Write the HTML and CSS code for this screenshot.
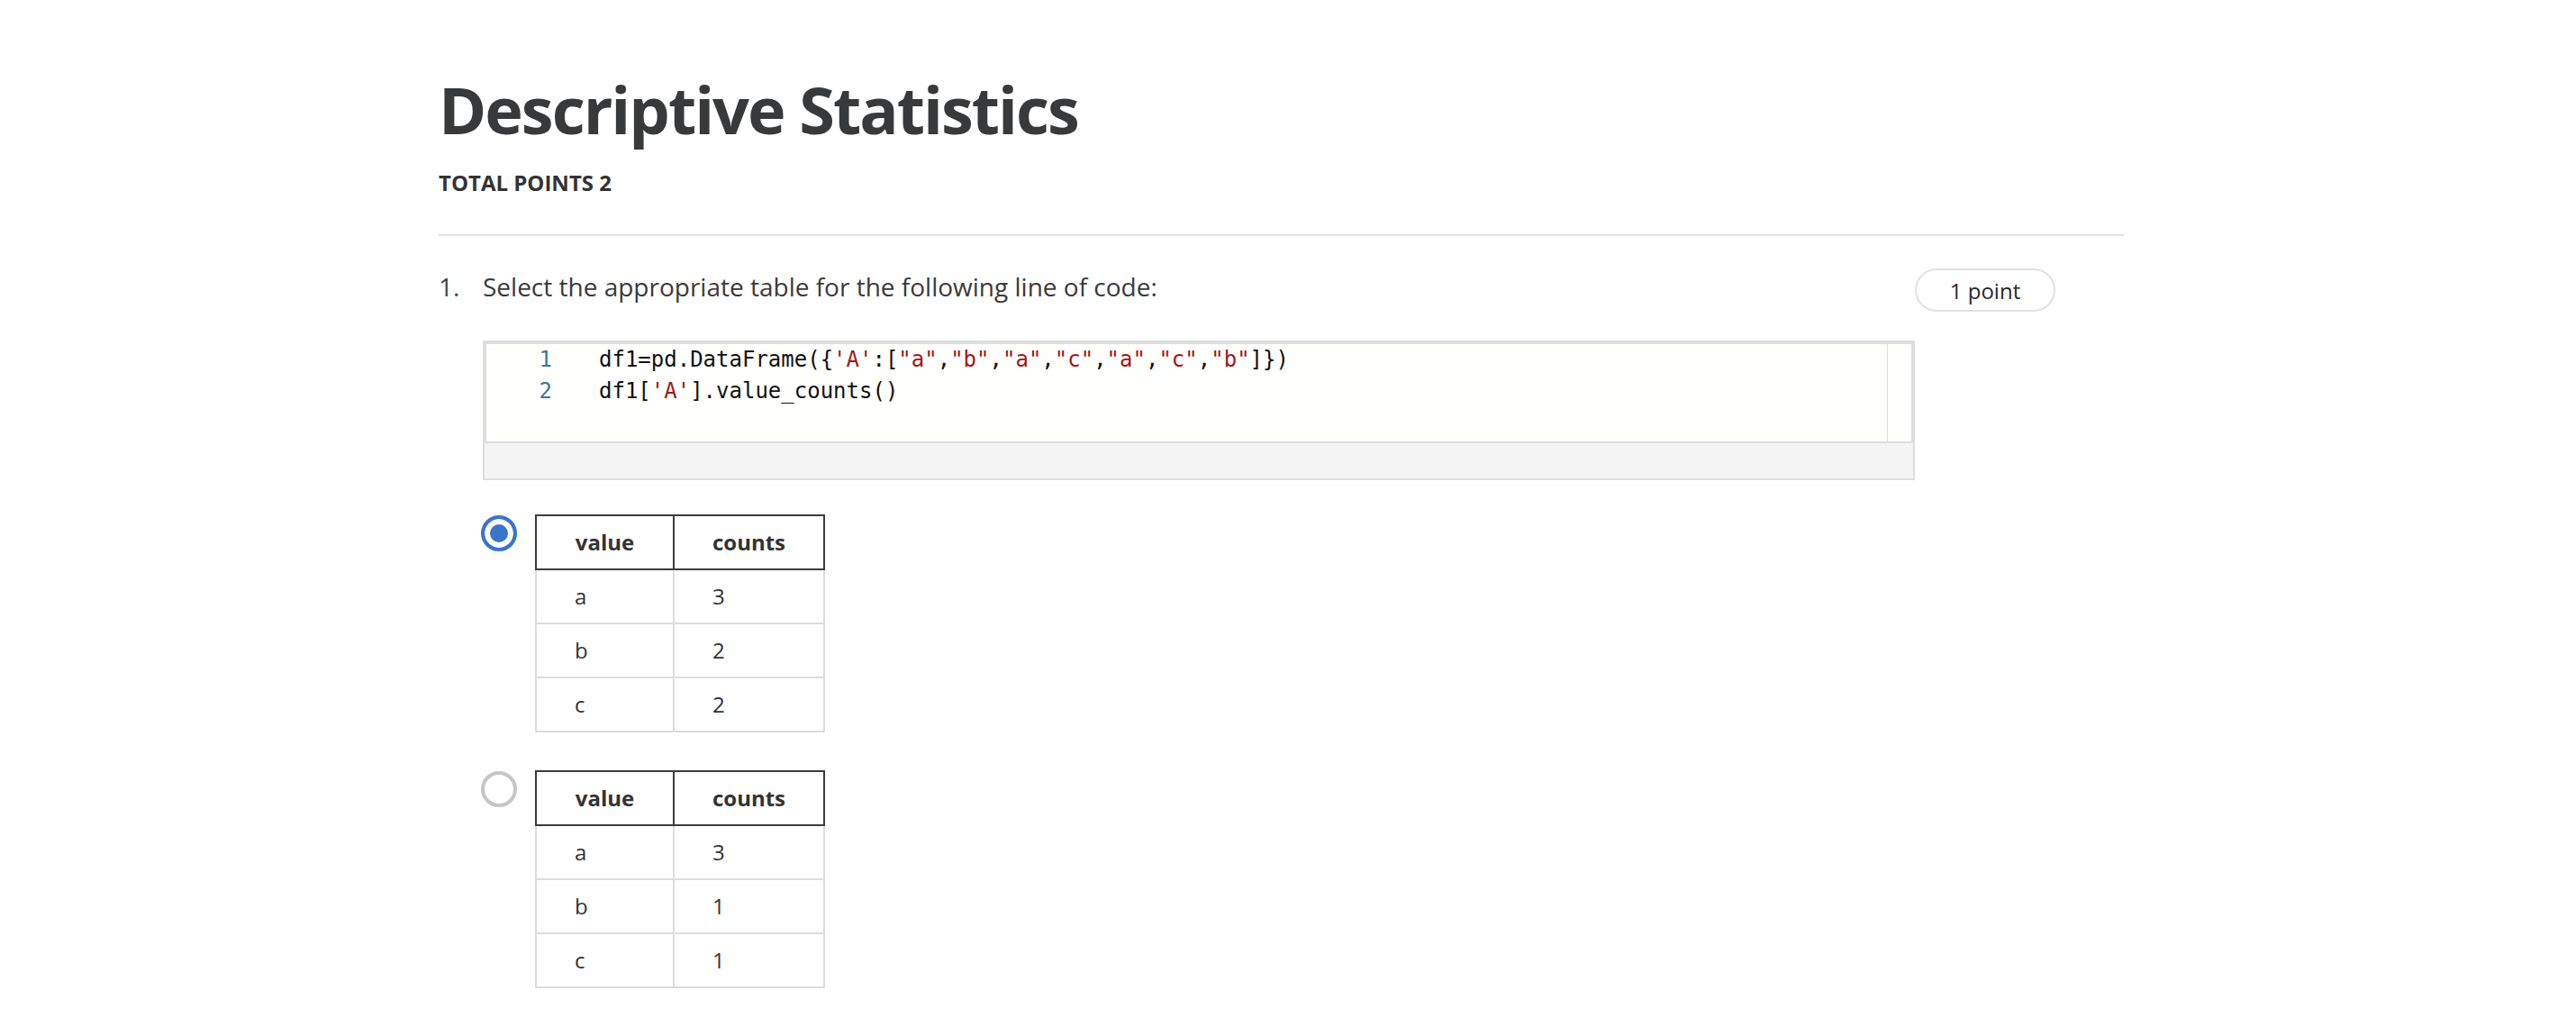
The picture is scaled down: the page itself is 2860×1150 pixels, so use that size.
FILE: index.html
```html
<!DOCTYPE html>
<html lang="en">
<head>
<meta charset="utf-8">
<title>Descriptive Statistics</title>
<link rel="stylesheet" href="styles.css">
</head>
<body>
<main class="page">
  <header class="quiz-header">
    <h1 class="quiz-title">Descriptive Statistics</h1>
    <div class="quiz-total">TOTAL POINTS 2</div>
  </header>
  <div class="divider"></div>

  <section class="question">
    <div class="q-num">1.</div>
    <div class="q-body">
      <div class="q-text">Select the appropriate table for the following line of code:</div>

      <div class="code-box">
        <div class="editor">
          <div class="gutter">
            <div class="ln">1</div>
            <div class="ln">2</div>
          </div>
          <div class="code">
            <div class="cl">df1=pd.DataFrame({<span class="str">'A'</span>:[<span class="str">"a"</span>,<span class="str">"b"</span>,<span class="str">"a"</span>,<span class="str">"c"</span>,<span class="str">"a"</span>,<span class="str">"c"</span>,<span class="str">"b"</span>]})</div>
            <div class="cl">df1[<span class="str">'A'</span>].value_counts()</div>
          </div>
          <div class="vscroll"></div>
        </div>
        <div class="code-footer"></div>
      </div>

      <div class="options">
        <div class="option">
          <span class="radio radio-on"></span>
          <table class="vtable">
            <colgroup><col class="c1"><col class="c2"></colgroup>
            <thead><tr><th>value</th><th>counts</th></tr></thead>
            <tbody>
              <tr><td>a</td><td>3</td></tr>
              <tr><td>b</td><td>2</td></tr>
              <tr><td>c</td><td>2</td></tr>
            </tbody>
          </table>
        </div>
        <div class="option">
          <span class="radio"></span>
          <table class="vtable">
            <colgroup><col class="c1"><col class="c2"></colgroup>
            <thead><tr><th>value</th><th>counts</th></tr></thead>
            <tbody>
              <tr><td>a</td><td>3</td></tr>
              <tr><td>b</td><td>1</td></tr>
              <tr><td>c</td><td>1</td></tr>
            </tbody>
          </table>
        </div>
      </div>
    </div>
    <div class="q-points"><span class="pill">1 point</span></div>
  </section>
</main>
</body>
</html>
```

FILE: styles.css
```css
html, body {
  margin: 0;
  padding: 0;
  background: #ffffff;
}

body {
  font-family: "Open Sans", "Noto Sans", sans-serif;
  color: #333333;
}

.page {
  margin-left: 487px;
  width: 1871px;
}

.quiz-header {
  padding-top: 78px;
}

.quiz-title {
  margin: 0;
  font-size: 72px;
  line-height: 86px;
  font-weight: 700;
  letter-spacing: -2px;
  color: #38393b;
}

.quiz-total {
  margin-top: 24px;
  font-size: 24px;
  line-height: 30px;
  font-weight: 700;
  color: #333333;
}

.divider {
  margin-top: 42px;
  border-top: 2px solid #e1e1e1;
}

.question {
  display: grid;
  grid-template-columns: 49px 1590px 156px;
  margin-top: 36px;
}

.q-num,
.q-text {
  font-size: 28px;
  line-height: 40px;
  color: #3a3a3a;
}

.q-num {
  color: #444444;
}

.q-points {
  display: flex;
  align-items: flex-start;
}

.pill {
  box-sizing: border-box;
  width: 156px;
  height: 48px;
  border: 2px solid #e2e2e2;
  border-radius: 24px;
  display: flex;
  align-items: center;
  justify-content: center;
  font-size: 24px;
  color: #2a2a2a;
}

/* code block */
.code-box {
  margin-top: 40px;
  border: 2px solid #dddddd;
}

.editor {
  display: flex;
  height: 108px;
  border: 2px solid #dddddd;
  background: #fffffd;
  font-family: "DejaVu Sans Mono", "Liberation Mono", monospace;
  font-size: 24px;
  line-height: 35px;
}

.gutter {
  width: 73px;
  text-align: right;
  color: #3d7692;
}

.code {
  flex: 1;
  padding-left: 52px;
  color: #111111;
}

.cl {
  white-space: pre;
}

.str {
  color: #a31515;
}

.vscroll {
  width: 26px;
  border-left: 1px solid #dddddd;
}

.code-footer {
  height: 39px;
  background: #f4f4f4;
}

/* options */
.options {
  margin-top: 38px;
}

.option {
  display: flex;
  align-items: flex-start;
}

.option + .option {
  margin-top: 42px;
}

.radio {
  box-sizing: border-box;
  flex: none;
  width: 40px;
  height: 40px;
  margin-left: -2px;
  margin-top: 1px;
  border-radius: 50%;
  border: 4px solid #c6c6c6;
  background: #ffffff;
}

.radio-on {
  border-color: #3b74cb;
  background: #3b74cb;
  box-shadow: inset 0 0 0 6px #ffffff;
}

.vtable {
  margin-left: 20px;
  border-collapse: collapse;
  width: 322px;
  font-size: 24px;
  color: #333333;
}

.vtable .c1 {
  width: 153px;
}

.vtable tr {
  height: 60px;
}

.vtable th {
  border: 2px solid #3c3c3c;
  font-weight: 700;
  text-align: center;
  padding: 0 0 2px;
}

.vtable td {
  border: 2px solid #dddddd;
  text-align: left;
  padding: 0 0 2px 42px;
}
```
